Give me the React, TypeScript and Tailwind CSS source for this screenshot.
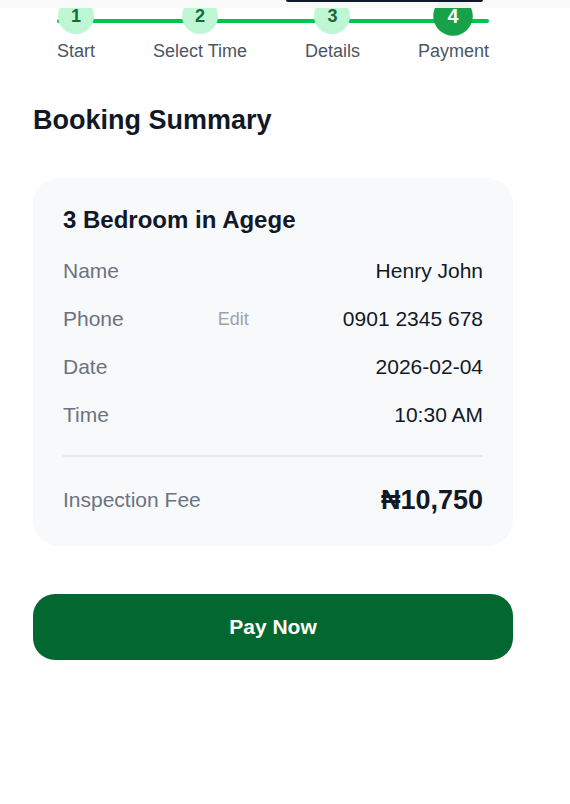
const steps = [
  { n: 1, label: 'Start' },
  { n: 2, label: 'Select Time' },
  { n: 3, label: 'Details' },
  { n: 4, label: 'Payment' },
]

const details: { label: string; value: string; edit?: boolean }[] = [
  { label: 'Name', value: 'Henry John' },
  { label: 'Phone', value: '0901 2345 678', edit: true },
  { label: 'Date', value: '2026-02-04' },
  { label: 'Time', value: '10:30 AM' },
]

function Stepper({ current }: { current: number }) {
  return (
    <div className="relative mx-[24px] -mt-[2px] flex justify-between">
      <div className="absolute left-0 right-0 top-[21px] h-[4px] rounded-full bg-[#00c450]" />
      {steps.map((s) => {
        const active = s.n === current
        return (
          <div key={s.n} className="relative flex flex-col items-center">
            <div
              className={
                active
                  ? 'flex h-9 w-9 scale-110 items-center justify-center rounded-full bg-[#17a24a] text-[18px] font-bold text-white'
                  : 'flex h-9 w-9 items-center justify-center rounded-full bg-[#bff6d3] text-[18px] font-bold text-[#176a3a]'
              }
            >
              {s.n}
            </div>
            <span className="mt-[4px] whitespace-nowrap text-[18px] leading-[27px] text-[#4b5563]">
              {s.label}
            </span>
          </div>
        )
      })}
    </div>
  )
}

export default function App() {
  return (
    <div
      className="relative min-h-[804px] overflow-hidden bg-white pb-10"
      style={{ fontFamily: '"Liberation Sans", Arial, sans-serif' }}
    >
      {/* sticky header, scrolled away */}
      <div className="absolute left-0 right-0 top-0 z-10 h-[8px] bg-[#fafafa]/95">
        <div className="absolute left-[286px] top-0 h-[2px] w-[197px] rounded-b-full bg-[#0f172a]" />
      </div>

      <div className="ml-[33px] w-[480px]">
        <Stepper current={4} />

        <h1 className="mt-[37px] text-[27px] font-bold leading-[36px] text-[#111827]">
          Booking Summary
        </h1>

        <div className="mt-[40px] rounded-[26px] bg-[#f8f9fb] px-[30px] pb-[28px] pt-[26px]">
          <h2 className="text-[24px] font-bold leading-[32px] text-[#111827]">3 Bedroom in Agege</h2>

          <div className="mt-[21px] flex flex-col gap-[20px]">
            {details.map((d) => (
              <div key={d.label} className="flex items-center justify-between text-[21px] leading-[28px]">
                <span className="text-[#6b7280]">{d.label}</span>
                {d.edit && <button className="text-[18px] text-[#9ca3af]">Edit</button>}
                <span className="text-[#111827]">{d.value}</span>
              </div>
            ))}
          </div>

          <div className="mt-[26px] h-[2px] bg-[#e5e7eb]" />

          <div className="mt-[25px] flex items-center justify-between">
            <span className="text-[21px] text-[#6b7280]">Inspection Fee</span>
            <span className="text-[27px] font-bold leading-[36px] text-[#111827]">₦10,750</span>
          </div>
        </div>

        <button className="mt-[48px] flex h-[66px] w-full items-center justify-center rounded-[22px] bg-[#036830] text-[21px] font-bold text-white">
          Pay Now
        </button>
      </div>
    </div>
  )
}
